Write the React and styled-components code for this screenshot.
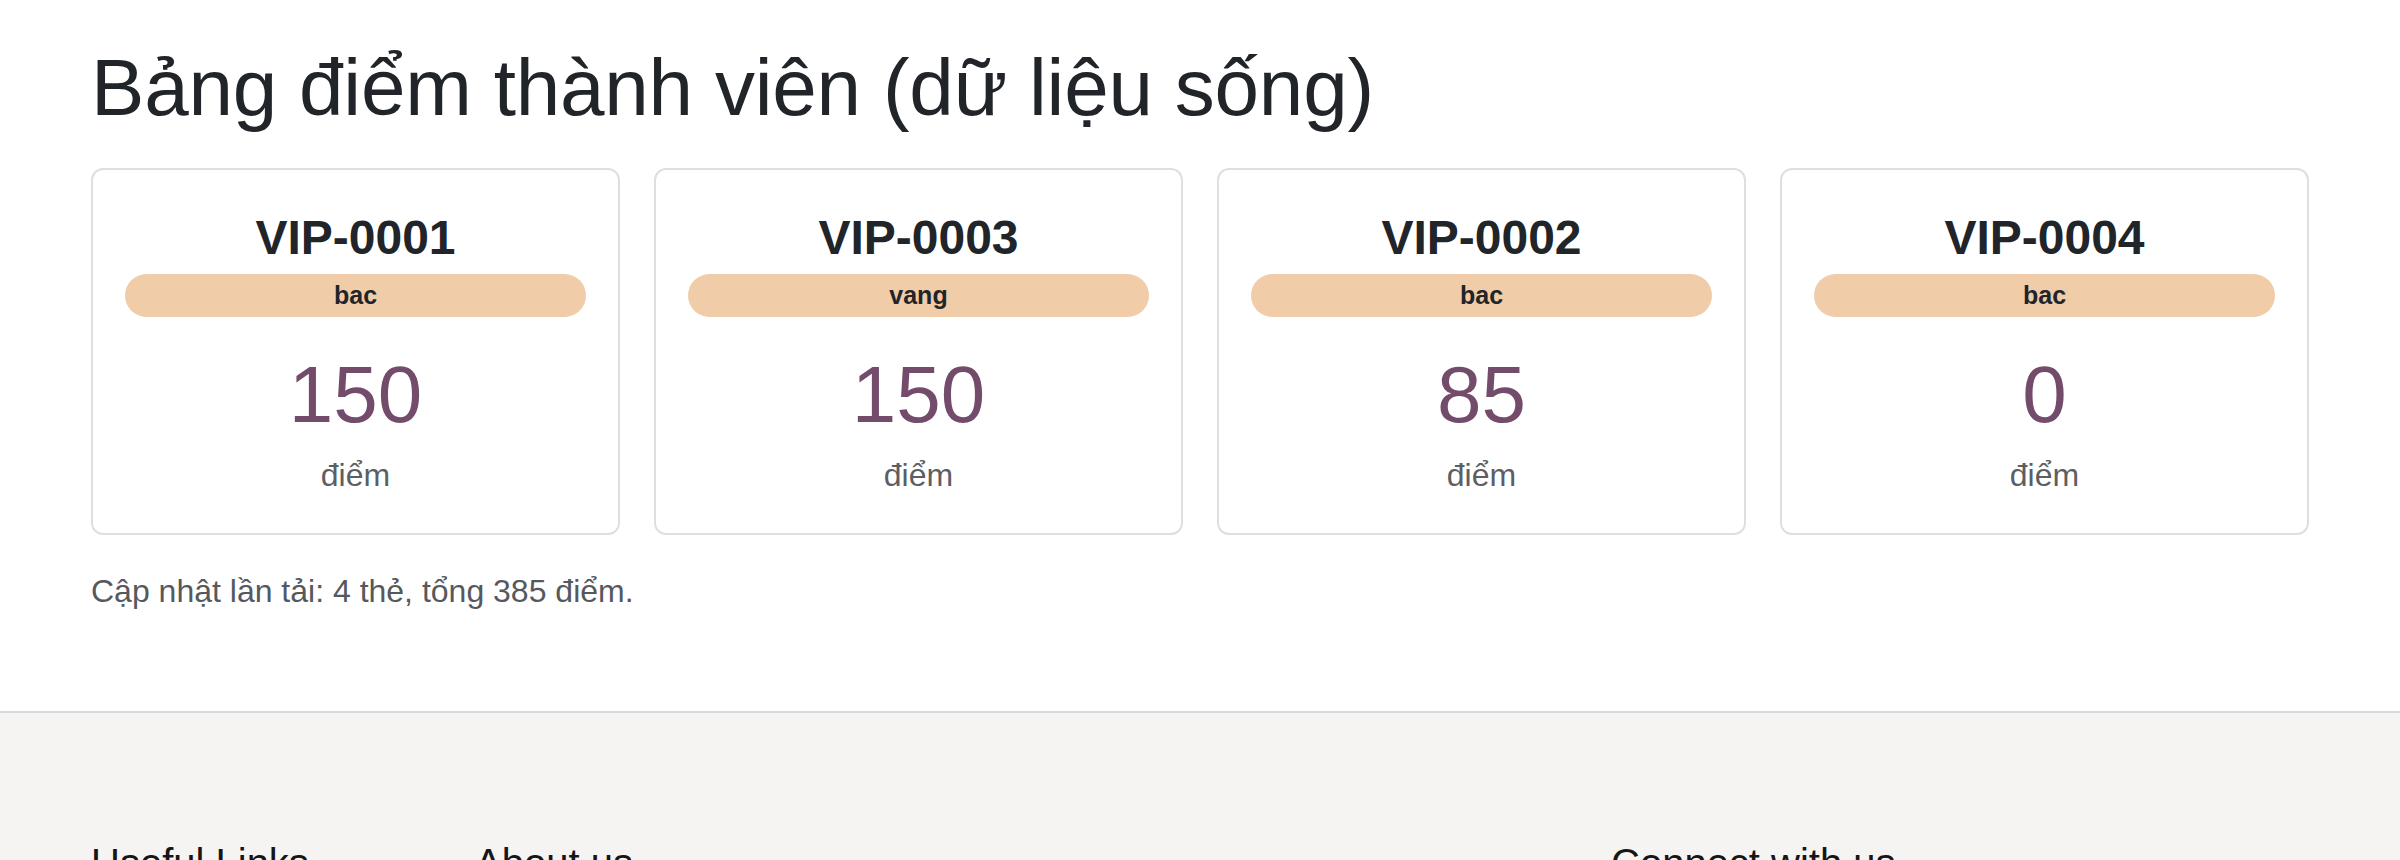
import React from "react";
import styled, { createGlobalStyle } from "styled-components";

const GlobalStyle = createGlobalStyle`
  html, body {
    margin: 0;
    padding: 0;
    background: #ffffff;
  }
  body {
    font-family: "Liberation Sans", Arial, Helvetica, sans-serif;
    color: #212529;
    -webkit-font-smoothing: antialiased;
  }
  * { box-sizing: border-box; }
`;

const Main = styled.main`
  padding: 40px 0 96px;
`;

const Container = styled.div`
  width: 2218px;
  max-width: 100%;
  margin: 0 auto;
`;

const Title = styled.h1`
  margin: 0 0 32px;
  font-size: 80px;
  line-height: 1.2;
  font-weight: 400;
  color: #212529;
  letter-spacing: -0.2px;
`;

const CardGrid = styled.div`
  display: grid;
  grid-template-columns: repeat(4, 1fr);
  gap: 34px;
`;

const Card = styled.div`
  display: flex;
  flex-direction: column;
  align-items: stretch;
  text-align: center;
  height: 367px;
  padding: 39px 32px 32px;
  border: 2px solid #dfdfdf;
  border-radius: 12px;
  background: #fff;
`;

const CardId = styled.h3`
  margin: 0;
  font-size: 48px;
  line-height: 1.2;
  font-weight: 700;
  color: #212529;
`;

const TierBadge = styled.div`
  margin-top: 7px;
  height: 43px;
  display: flex;
  align-items: center;
  justify-content: center;
  border-radius: 22px;
  background: ${(p) => p.$bg || "#f0cca8"};
  font-size: 25px;
  font-weight: 700;
  color: #212529;
  line-height: 1;
`;

const Points = styled.div`
  margin-top: 30px;
  font-size: 80px;
  line-height: 1.2;
  font-weight: 400;
  color: #744c6b;
`;

const PointsLabel = styled.div`
  margin-top: 8px;
  font-size: 32px;
  line-height: 1.5;
  color: #5b5f63;
`;

const Summary = styled.p`
  margin: 32px 0 0;
  font-size: 32px;
  line-height: 1.5;
  color: #55595d;
`;

const Footer = styled.footer`
  background: #f5f4f2;
  border-top: 2px solid #d9d9d9;
  padding: 126px 0 96px;
`;

const FooterGrid = styled.div`
  display: grid;
  grid-template-columns: 384px 1136px 1fr;
`;

const FooterCol = styled.div`
  display: flex;
  flex-direction: column;
  gap: 16px;
`;

const FooterHeading = styled.h5`
  margin: 0 0 8px;
  font-size: 40px;
  line-height: 1.2;
  font-weight: 500;
  color: #161616;
`;

const FooterLink = styled.a`
  font-size: 30px;
  line-height: 1.5;
  color: #444;
  text-decoration: none;
`;

const members = [
  { id: "VIP-0001", tier: "bac", points: 150 },
  { id: "VIP-0003", tier: "vang", points: 150 },
  { id: "VIP-0002", tier: "bac", points: 85 },
  { id: "VIP-0004", tier: "bac", points: 0 },
];

export default function App() {
  const total = members.reduce((s, m) => s + m.points, 0);
  return (
    <>
      <GlobalStyle />
      <Main>
        <Container>
          <Title>Bảng điểm thành viên (dữ liệu sống)</Title>
          <CardGrid>
            {members.map((m) => (
              <Card key={m.id}>
                <CardId>{m.id}</CardId>
                <TierBadge>{m.tier}</TierBadge>
                <Points>{m.points}</Points>
                <PointsLabel>điểm</PointsLabel>
              </Card>
            ))}
          </CardGrid>
          <Summary>
            Cập nhật lần tải: {members.length} thẻ, tổng {total} điểm.
          </Summary>
        </Container>
      </Main>
      <Footer>
        <Container>
          <FooterGrid>
            <FooterCol>
              <FooterHeading>Useful Links</FooterHeading>
              <FooterLink href="#">Home</FooterLink>
              <FooterLink href="#">Members</FooterLink>
            </FooterCol>
            <FooterCol>
              <FooterHeading>About us</FooterHeading>
              <FooterLink href="#">Our story</FooterLink>
            </FooterCol>
            <FooterCol>
              <FooterHeading>Connect with us</FooterHeading>
              <FooterLink href="#">Contact</FooterLink>
            </FooterCol>
          </FooterGrid>
        </Container>
      </Footer>
    </>
  );
}
